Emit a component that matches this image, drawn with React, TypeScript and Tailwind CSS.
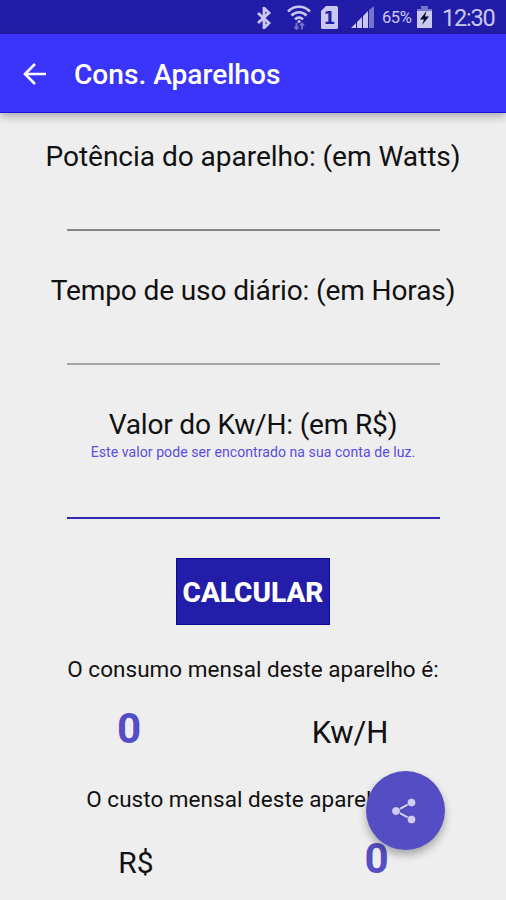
import { useState } from "react";

interface IField {
  label: string;
  labelClass: string;
  hint?: string;
  line: string;
  value: string;
  onChange: (value: string) => void;
}

const StatusBar = () => (
  <div className="flex h-[34px] items-center bg-[#221da8] pl-[256px] text-[#c9c8f0]">
    <svg width="16" height="22" viewBox="0 0 16 22" className="mt-[2px]">
      <path
        d="M2 6l11 10-5 5V1l5 5L2 16"
        fill="none"
        stroke="currentColor"
        strokeWidth="2.8"
      />
    </svg>
    <svg width="24" height="26" viewBox="0 0 24 26" className="ml-[15px]">
      <g fill="none" stroke="currentColor" strokeWidth="2.6">
        <path d="M1 7.5c6-6.3 16-6.3 22 0" />
        <path d="M4.5 11.500c4.200-4.300 10.800-4.300 15 0" />
        <path d="M8 15.300c2.300-2.300 5.700-2.300 8 0" />
      </g>
      <circle cx="12" cy="17.500" r="1.600" fill="currentColor" />
      <path
        d="M9.500 19v6M7.500 23l2 2 2-2M15 25.500v-6M13 21.500l2-2 2 2"
        fill="none"
        stroke="#7370cc"
        strokeWidth="1.900"
      />
    </svg>
    <div className="relative ml-[10px] h-[23px] w-[17px]">
      <svg width="17" height="23" viewBox="0 0 17 23">
        <path d="M5 0h10.500Q17 0 17 1.500v20q0 1.500-1.500 1.500h-14Q0 23 0 21.500V5z" fill="currentColor" />
      </svg>
      <span className="absolute inset-0 text-center font-['DejaVu_Sans'] text-[17px] font-bold leading-[24px] text-[#221da8]">
        1
      </span>
    </div>
    <svg width="24" height="23" viewBox="0 0 24 23" className="ml-[13px]">
      <path d="M0 22l5-5v5zM6 22v-6l5-5v11zM12 22V10l5-5v17z" fill="currentColor" />
      <path d="M18 22V4l5-4v22z" fill="#7774cd" />
    </svg>
    <span className="ml-[7px] mt-[3px] w-[32px] whitespace-nowrap text-[16.500px] tracking-[-0.400px]">65%</span>
    <svg width="15" height="22" viewBox="0 0 15 22" className="ml-[3px]">
      <path d="M4 0h7v3h4v5H0V3h4z" fill="#7774cd" />
      <path d="M0 5h15v17H0z" fill="currentColor" />
      <path d="M9.500 5L3 13.500h4L5 19l7-8.500H8z" fill="#090827" />
    </svg>
    <span className="ml-[10px] mt-[3px] text-[23.500px] tracking-[-1.200px]">12:30</span>
  </div>
);

const Field = ({ label, labelClass, hint, line, value, onChange }: IField) => (
  <label className="flex w-full flex-col items-center">
    <span className={`h-[34px] whitespace-nowrap text-[28.100px] leading-[36px] ${labelClass}`}>
      {label}
    </span>
    {hint && (
      <span className="mt-[3px] whitespace-nowrap text-[14.060px] leading-[16px] tracking-[0.060px] text-[#594de0]">
        {hint}
      </span>
    )}
    <input
      className={`w-[373px] border-b-2 bg-transparent text-center text-[25px] outline-none ${line}`}
      type="text"
      value={value}
      onChange={(e) => onChange(e.target.value)}
    />
  </label>
);

const App = () => {
  const [watts, setWatts] = useState("");
  const [hours, setHours] = useState("");
  const [price, setPrice] = useState("");
  const [usage, setUsage] = useState(0);
  const [cost, setCost] = useState(0);

  const calculate = () => {
    const total = (Number(watts) * Number(hours) * 30) / 1000;
    setUsage(total);
    setCost(total * Number(price));
  };

  return (
    <div className="relative flex h-[900px] w-[506px] flex-col overflow-hidden bg-[#eeeeee] font-['Roboto',sans-serif] text-[#111111]">
      <StatusBar />
      <header className="z-10 flex h-[79px] shrink-0 items-center border-b border-[#1d10dc] bg-[#3b35fb] pl-[23px] pt-[2px] text-white shadow-[0_3px_9px_rgba(0,0,0,0.300)]">
        <svg width="24" height="24" viewBox="0 0 24 24" className="mb-[1px]">
          <path
            d="M23 12H2M12 2L2 12l10 10"
            fill="none"
            stroke="currentColor"
            strokeWidth="2.600"
          />
        </svg>
        <h1 className="ml-[27px] pt-[2px] text-[28.100px] font-medium">Cons. Aparelhos</h1>
      </header>

      <main className="flex flex-col items-center pt-[26px]">
        <Field
          label="Potência do aparelho: (em Watts)"
          labelClass="tracking-[-0.060px]"
          line="h-[58px] border-[#848784]"
          value={watts}
          onChange={setWatts}
        />
        <div className="mt-[42px]">
          <Field
            label="Tempo de uso diário: (em Horas)"
            labelClass="tracking-[-0.150px]"
            line="h-[58px] border-[#a3a3a3]"
            value={hours}
            onChange={setHours}
          />
        </div>
        <div className="mt-[42px]">
          <Field
            label="Valor do Kw/H: (em R$)"
            labelClass="tracking-[-0.200px]"
            hint="Este valor pode ser encontrado na sua conta de luz."
            line="h-[59px] border-[#3029b5]"
            value={price}
            onChange={setPrice}
          />
        </div>

        <button
          className="mt-[39px] h-[67px] w-[154px] whitespace-nowrap border border-[#0f0798] bg-[#231eaa] pt-[2px] text-[28px] font-extrabold text-white"
          onClick={calculate}>
          CALCULAR
        </button>

        <p className="mt-[30px] whitespace-nowrap text-[22.500px] leading-[28px] tracking-[0.030px]">
          O consumo mensal deste aparelho é:
        </p>
        <div className="mt-[21px] flex w-full items-baseline leading-[50px]">
          <span className="w-[258px] text-center text-[42.200px] font-bold text-[#554dc4]">{usage}</span>
          <span className="w-[184px] text-center text-[31px]">Kw/H</span>
        </div>

        <p className="mt-[27px] whitespace-nowrap text-[22.500px] leading-[28px] tracking-[0.030px]">
          O custo mensal deste aparelho é:
        </p>
        <div className="mt-[21px] flex w-full items-baseline leading-[50px]">
          <span className="w-[272px] text-center text-[30px]">R$</span>
          <span className="w-[209px] text-center text-[42.200px] font-bold text-[#554dc4]">{cost}</span>
        </div>
      </main>

      <button className="absolute left-[366px] top-[771px] flex h-[79px] w-[79px] items-center justify-center rounded-full bg-[#554dc4] shadow-[0_5px_9px_rgba(0,0,0,0.300)]">
        <svg width="26" height="26" viewBox="0 0 26 26" className="mr-[3px]">
          <path d="M20.500 4.500L5 13l15.500 8.500" fill="none" stroke="#3d35a6" strokeWidth="3.600" />
          <path d="M20.500 4.500L5 13l15.500 8.500" fill="none" stroke="#cfcdf5" strokeWidth="2.200" />
          <g fill="#cfcdf5" stroke="#3d35a6" strokeWidth="0.600">
            <circle cx="20.500" cy="4.500" r="4.300" />
            <circle cx="5" cy="13" r="4.300" />
            <circle cx="20.500" cy="21.500" r="4.300" />
          </g>
        </svg>
      </button>
    </div>
  );
};

export default App;
